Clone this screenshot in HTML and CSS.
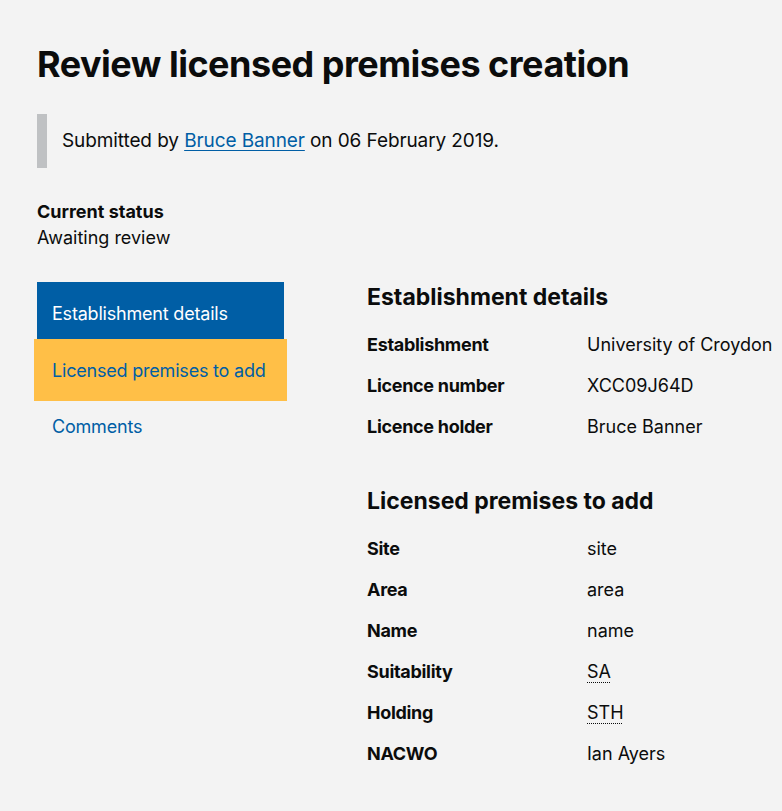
FILE: index.html
```html
<!DOCTYPE html>
<html lang="en">
<head>
<meta charset="utf-8">
<title>Review licensed premises creation</title>
<link rel="stylesheet" href="styles.css">
</head>
<body>
<main class="page">
  <h1 class="title">Review licensed premises creation</h1>
  <div class="inset">Submitted by <a href="#" class="link">Bruce Banner</a> on 06 February 2019.</div>
  <div class="status">
    <div class="status-label">Current status</div>
    <div class="status-value">Awaiting review</div>
  </div>
  <div class="layout">
    <nav class="side-nav">
      <a href="#" class="nav-item active">Establishment details</a>
      <a href="#" class="nav-item focus">Licensed premises to add</a>
      <a href="#" class="nav-item after-focus">Comments</a>
    </nav>
    <div class="content">
      <section class="section">
        <h2 class="section-title">Establishment details</h2>
        <dl class="rows">
          <div class="row"><dt>Establishment</dt><dd>University of Croydon</dd></div>
          <div class="row"><dt>Licence number</dt><dd>XCC09J64D</dd></div>
          <div class="row"><dt>Licence holder</dt><dd>Bruce Banner</dd></div>
        </dl>
      </section>
      <section class="section">
        <h2 class="section-title">Licensed premises to add</h2>
        <dl class="rows">
          <div class="row"><dt>Site</dt><dd>site</dd></div>
          <div class="row"><dt>Area</dt><dd>area</dd></div>
          <div class="row"><dt>Name</dt><dd>name</dd></div>
          <div class="row"><dt>Suitability</dt><dd><abbr title="Small animals">SA</abbr></dd></div>
          <div class="row"><dt>Holding</dt><dd><abbr title="Short term holding">STH</abbr></dd></div>
          <div class="row"><dt>NACWO</dt><dd>Ian Ayers</dd></div>
        </dl>
      </section>
    </div>
  </div>
</main>
</body>
</html>
```
FILE: styles.css
```css
html, body {
  margin: 0;
  padding: 0;
  background: #f3f3f3;
}
body {
  font-family: Inter, "Liberation Sans", sans-serif;
  color: #0b0c0c;
  font-size: 18px;
}
.page {
  padding: 43px 0 0 37px;
}
.title {
  margin: 0 0 28px;
  font-size: 36px;
  line-height: 43px;
  font-weight: 700;
  letter-spacing: -0.5px;
}
.inset {
  border-left: 10px solid #bfc1c3;
  padding: 16px 15px;
  font-size: 19px;
  line-height: 22px;
  letter-spacing: -0.1px;
  margin-bottom: 31px;
}
.link {
  color: #005ea5;
  text-decoration: underline;
  text-decoration-thickness: 1px;
  text-underline-offset: 3px;
}
.status {
  line-height: 26px;
}
.status-label {
  font-weight: 700;
}
.layout {
  display: flex;
  margin-top: 31px;
}
.side-nav {
  width: 247px;
  display: flex;
  flex-direction: column;
  flex-shrink: 0;
}
.nav-item {
  box-sizing: border-box;
  display: flex;
  align-items: center;
  height: 57px;
  padding: 0 15px;
  color: #005ea5;
  text-decoration: none;
  font-size: 18px;
  letter-spacing: -0.2px;
}
.nav-item.active {
  background: #005ea5;
  color: #ffffff;
  padding-top: 5px;
}
.nav-item.focus {
  background: #ffbf47;
  height: 62px;
  margin: 0 -3px;
  padding: 0 18px;
}
.nav-item.after-focus {
  margin-top: -3px;
}
.content {
  margin-left: 83px;
  flex: 1;
}
.section {
  margin-bottom: 39px;
}
.section-title {
  margin: 0 0 12px;
  font-size: 23px;
  line-height: 30px;
  font-weight: 700;
}
.rows {
  margin: 0;
}
.row {
  display: flex;
  height: 41px;
  align-items: center;
}
.row dt {
  width: 220px;
  font-weight: 700;
  letter-spacing: -0.3px;
}
.row dd {
  margin: 0;
}
abbr {
  text-decoration: underline dotted 1px;
  text-underline-offset: 4px;
}
```
